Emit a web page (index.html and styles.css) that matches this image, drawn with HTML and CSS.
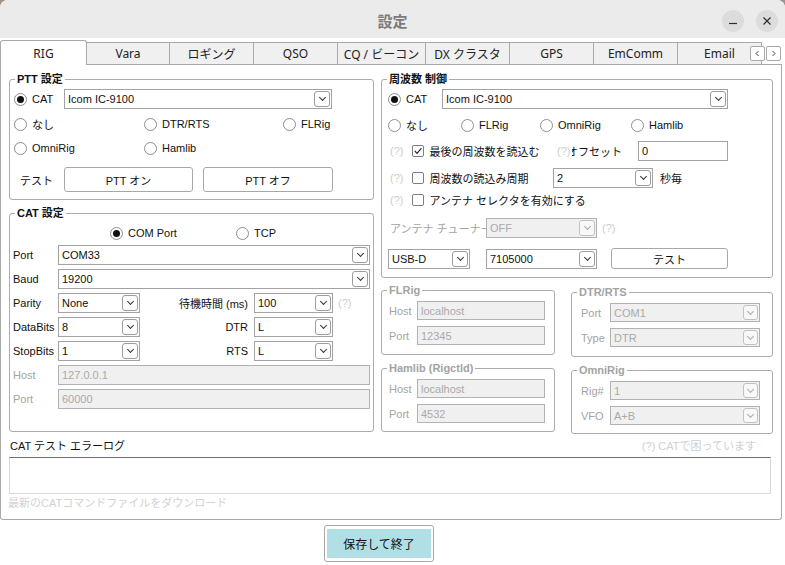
FILE: index.html
```html
<!DOCTYPE html>
<html lang="ja">
<head>
<meta charset="utf-8">
<title>設定</title>
<link rel="stylesheet" href="styles.css">
</head>
<body>
<div class="window">
  <header class="titlebar">
    <div></div>
    <div class="title">設定</div>
    <div class="wbtns">
      <span class="wbtn"><svg width="10" height="10" viewBox="0 0 10 10"><path d="M1 7.5 H9" stroke="#2e2e2e" stroke-width="1.2"/></svg></span>
      <span class="wbtn"><svg width="10" height="10" viewBox="0 0 10 10"><path d="M1.5 1.5 L8.5 8.5 M8.5 1.5 L1.5 8.5" stroke="#2e2e2e" stroke-width="1.2"/></svg></span>
    </div>
  </header>

  <nav class="tabs">
    <div class="tab active t-rig">RIG</div>
    <div class="tab t-vara">Vara</div>
    <div class="tab t-std">ロギング</div>
    <div class="tab t-std">QSO</div>
    <div class="tab t-cq">CQ / ビーコン</div>
    <div class="tab t-std">DX クラスタ</div>
    <div class="tab t-std">GPS</div>
    <div class="tab t-std">EmComm</div>
    <div class="tab t-std">Email</div>
    <div class="tabscroll">
      <span class="tsbtn"><svg width="7" height="7" viewBox="0 0 7 7"><path d="M4.5 1 L2 3.5 L4.5 6" fill="none" stroke="#444" stroke-width="1"/></svg></span>
      <span class="tsbtn"><svg width="7" height="7" viewBox="0 0 7 7"><path d="M2.5 1 L5 3.5 L2.5 6" fill="none" stroke="#444" stroke-width="1"/></svg></span>
    </div>
  </nav>

  <main class="panel">
    <div class="cols">
      <div class="col-left">
        <section class="group g-ptt">
          <div class="gtitle">PTT 設定</div>
          <div class="row r-ptt1">
            <div class="opt c50"><span class="radio on"></span>CAT</div>
            <div class="sel w268"><span class="val">Icom IC-9100</span><span class="dd"></span></div>
          </div>
          <div class="row r-ptt2">
            <div class="opt c130"><span class="radio"></span>なし</div>
            <div class="opt c139"><span class="radio"></span>DTR/RTS</div>
            <div class="opt"><span class="radio"></span>FLRig</div>
          </div>
          <div class="row r-ptt3">
            <div class="opt c130"><span class="radio"></span>OmniRig</div>
            <div class="opt"><span class="radio"></span>Hamlib</div>
          </div>
          <div class="row r-ptt4">
            <span class="testlbl">テスト</span>
            <div class="btn w129">PTT オン</div>
            <div class="btn w130 ml10">PTT オフ</div>
          </div>
        </section>

        <section class="group g-cat">
          <div class="gtitle">CAT 設定</div>
          <div class="row r-conn">
            <div class="opt c126"><span class="radio on"></span>COM Port</div>
            <div class="opt"><span class="radio"></span>TCP</div>
          </div>
          <div class="fld">
            <span class="flbl">Port</span>
            <div class="sel w312"><span class="val">COM33</span><span class="dd"></span></div>
          </div>
          <div class="fld">
            <span class="flbl">Baud</span>
            <div class="sel w312"><span class="val">19200</span><span class="dd"></span></div>
          </div>
          <div class="fld">
            <span class="flbl">Parity</span>
            <div class="sel w82"><span class="val">None</span><span class="dd"></span></div>
            <span class="rlbl">待機時間 (ms)</span>
            <div class="sel w79"><span class="val">100</span><span class="dd"></span></div>
            <span class="q ml5">(?)</span>
          </div>
          <div class="fld">
            <span class="flbl">DataBits</span>
            <div class="sel w82"><span class="val">8</span><span class="dd"></span></div>
            <span class="rlbl">DTR</span>
            <div class="sel w79"><span class="val">L</span><span class="dd"></span></div>
          </div>
          <div class="fld">
            <span class="flbl">StopBits</span>
            <div class="sel w82"><span class="val">1</span><span class="dd"></span></div>
            <span class="rlbl">RTS</span>
            <div class="sel w79"><span class="val">L</span><span class="dd"></span></div>
          </div>
          <div class="fld">
            <span class="flbl dim">Host</span>
            <div class="inp dis w312">127.0.0.1</div>
          </div>
          <div class="fld">
            <span class="flbl dim">Port</span>
            <div class="inp dis w312">60000</div>
          </div>
        </section>
      </div>

      <div class="col-right">
        <section class="group g-freq">
          <div class="gtitle">周波数 制御</div>
          <div class="row rf1">
            <div class="opt c54"><span class="radio on"></span>CAT</div>
            <div class="sel w286"><span class="val">Icom IC-9100</span><span class="dd"></span></div>
          </div>
          <div class="row rf2">
            <div class="opt c73"><span class="radio"></span>なし</div>
            <div class="opt c79"><span class="radio"></span>FLRig</div>
            <div class="opt c91"><span class="radio"></span>OmniRig</div>
            <div class="opt"><span class="radio"></span>Hamlib</div>
          </div>
          <div class="row rf3">
            <div class="qcb c169">
              <span class="q">(?)</span>
              <span class="cb"><svg width="10" height="10" viewBox="0 0 10 10"><path d="M1.8 5 L4.1 7.4 L8.4 2.2" fill="none" stroke="#222" stroke-width="1.1"/></svg></span>
              <span>最後の周波数を読込む</span>
            </div>
            <span class="q qcover">(?)</span>
            <span class="offlbl">オフセット</span>
            <div class="inp w90">0</div>
          </div>
          <div class="row rf4">
            <div class="qcb c165">
              <span class="q">(?)</span>
              <span class="cb"></span>
              <span>周波数の読込み周期</span>
            </div>
            <div class="sel w100"><span class="val">2</span><span class="dd"></span></div>
            <span class="ml7">秒毎</span>
          </div>
          <div class="row rf5">
            <div class="qcb">
              <span class="q">(?)</span>
              <span class="cb"></span>
              <span>アンテナ セレクタを有効にする</span>
            </div>
          </div>
          <div class="row rf6">
            <span class="antlbl">アンテナ チューナー</span>
            <div class="sel dis w111"><span class="val">OFF</span><span class="dd"></span></div>
            <span class="q ml5">(?)</span>
          </div>
          <div class="row rf7">
            <div class="sel w82"><span class="val">USB-D</span><span class="dd"></span></div>
            <div class="sel w111 ml16"><span class="val">7105000</span><span class="dd"></span></div>
            <div class="btn w117 h21 ml14">テスト</div>
          </div>
        </section>

        <div class="subs">
          <div class="subcol-l">
            <section class="group g-dis g-flrig">
              <div class="gtitle">FLRig</div>
              <div class="sfld first">
                <span class="slbl w28">Host</span>
                <div class="inp dis h19 w128">localhost</div>
              </div>
              <div class="sfld">
                <span class="slbl w28">Port</span>
                <div class="inp dis h19 w128">12345</div>
              </div>
            </section>
            <section class="group g-dis g-hamlib">
              <div class="gtitle">Hamlib (Rigctld)</div>
              <div class="sfld first">
                <span class="slbl w28">Host</span>
                <div class="inp dis h19 w128">localhost</div>
              </div>
              <div class="sfld">
                <span class="slbl w28">Port</span>
                <div class="inp dis h19 w128">4532</div>
              </div>
            </section>
          </div>
          <div class="subcol-r">
            <section class="group g-dis g-dtr">
              <div class="gtitle">DTR/RTS</div>
              <div class="sfld first">
                <span class="slbl w29">Port</span>
                <div class="sel dis h19 w150"><span class="val">COM1</span><span class="dd"></span></div>
              </div>
              <div class="sfld">
                <span class="slbl w29">Type</span>
                <div class="sel dis h19 w150"><span class="val">DTR</span><span class="dd"></span></div>
              </div>
            </section>
            <section class="group g-dis g-omni">
              <div class="gtitle">OmniRig</div>
              <div class="sfld first">
                <span class="slbl w29">Rig#</span>
                <div class="sel dis h19 w150"><span class="val">1</span><span class="dd"></span></div>
              </div>
              <div class="sfld">
                <span class="slbl w29">VFO</span>
                <div class="sel dis h19 w150"><span class="val">A+B</span><span class="dd"></span></div>
              </div>
            </section>
          </div>
        </div>
      </div>
    </div>

    <div class="logrow">
      <span>CAT テスト エラーログ</span>
      <span class="help">(?) CATで困っています</span>
    </div>
    <div class="logbox"></div>
    <div class="dl">最新のCATコマンドファイルをダウンロード</div>
  </main>

  <footer class="footer">
    <div class="save"><div class="save-in">保存して終了</div></div>
  </footer>
</div>
</body>
</html>
```

FILE: styles.css
```css
* { box-sizing: border-box; }
html { background: #9d958d; }
body {
  margin: 0;
  width: 785px;
  height: 565px;
  overflow: hidden;
  font-family: "Liberation Sans", "Noto Sans CJK JP", sans-serif;
  font-size: 11px;
  color: #111;
}
.window {
  width: 785px;
  height: 565px;
  background: #fff;
  border-radius: 8px 8px 0 0;
  overflow: hidden;
}

/* title bar */
.titlebar {
  height: 38px;
  background: #ebebeb;
  display: grid;
  grid-template-columns: 1fr auto 1fr;
  align-items: center;
}
.title {
  font-family: "Noto Sans CJK JP", sans-serif;
  font-size: 15px;
  font-weight: 700;
  color: #7c7c7c;
  margin-top: 3px;
}
.wbtns {
  justify-self: end;
  display: flex;
  gap: 12px;
  margin-right: 7px;
  margin-top: 4px;
}
.wbtn {
  width: 22px;
  height: 22px;
  border-radius: 50%;
  background: #dcdcdc;
  display: flex;
  align-items: center;
  justify-content: center;
}

/* tabs */
.tabs {
  position: relative;
  margin-top: 2px;
  width: 782px;
  height: 25px;
  display: flex;
  align-items: flex-end;
  overflow: hidden;
  box-shadow: inset 0 -1px #a9a9a9;
}
.tab {
  flex: none;
  height: 23px;
  border: 1px solid #a9a9a9;
  margin-left: -1px;
  background: #f0f0f0;
  font-family: "Noto Sans", "Noto Sans CJK JP", sans-serif;
  font-size: 12px;
  color: #222;
  display: flex;
  align-items: center;
  justify-content: center;
  white-space: nowrap;
}
.tab:first-child { margin-left: 0; }
.tab.active {
  height: 25px;
  background: #fff;
  border-bottom: none;
  border-radius: 3px 3px 0 0;
  position: relative;
  z-index: 1;
}
.t-rig { width: 87px; }
.t-vara { width: 84px; }
.t-std { width: 85px; }
.t-cq { width: 89px; }
.tabscroll {
  position: absolute;
  left: 750px;
  top: 6px;
  display: flex;
  gap: 1px;
  z-index: 2;
}
.tsbtn {
  width: 15px;
  height: 15px;
  border: 1px solid #a9a9a9;
  border-radius: 2px;
  background: #fff;
  display: flex;
  align-items: center;
  justify-content: center;
}

/* panel */
.panel {
  width: 782px;
  height: 455px;
  border: 1px solid #a9a9a9;
  border-top: none;
  border-radius: 0 0 3px 3px;
  padding: 14px 0 0 8px;
}
.cols { display: flex; align-items: flex-start; }
.col-left { width: 365px; flex: none; }
.col-right { width: 392px; margin-left: 7px; flex: none; }

.group {
  border: 1px solid #acacac;
  border-radius: 3px;
}
.gtitle {
  width: fit-content;
  height: 14px;
  line-height: 14px;
  margin: -8px 0 0 5px;
  padding: 0 2px;
  background: #fff;
  font-weight: bold;
  white-space: nowrap;
}
.g-dis .gtitle { color: #a3a3a3; }

.row { display: flex; align-items: center; }
.opt { display: flex; align-items: center; gap: 5px; white-space: nowrap; flex: none; }
.radio {
  width: 13px;
  height: 13px;
  border: 1px solid #8e8e8e;
  border-radius: 50%;
  background: #fff;
  display: flex;
  align-items: center;
  justify-content: center;
  flex: none;
}
.radio.on::after {
  content: "";
  width: 7px;
  height: 7px;
  border-radius: 50%;
  background: #111;
}
.cb {
  width: 12px;
  height: 12px;
  border: 1px solid #7d7d7d;
  border-radius: 2px;
  background: #fff;
  display: flex;
  align-items: center;
  justify-content: center;
  flex: none;
}
.q { color: #cdcdcd; white-space: nowrap; flex: none; }

/* select / input / button */
.sel {
  display: flex;
  align-items: center;
  height: 20px;
  border: 1px solid #a3a3a3;
  background: #fff;
  padding-left: 3px;
  flex: none;
}
.sel .val { flex: 1; white-space: nowrap; overflow: hidden; }
.dd {
  width: 16px;
  height: 16px;
  border: 1px solid #9d9d9d;
  border-radius: 3px;
  margin-right: 1px;
  background: #fff;
  display: flex;
  align-items: center;
  justify-content: center;
  flex: none;
}
.dd::before {
  content: "";
  width: 4px;
  height: 4px;
  border-right: 1px solid #333;
  border-bottom: 1px solid #333;
  transform: rotate(45deg);
  margin-top: -3px;
}
.sel.dis { background: #f0f0f0; color: #aaa; border-color: #b2b2b2; }
.sel.dis .dd { border-color: #c2c2c2; background: #f8f8f8; }
.sel.dis .dd::before { border-color: #aaa; }
.sel.h19 { height: 19px; }
.sel.h19 .dd { width: 15px; height: 15px; }

.inp {
  display: flex;
  align-items: center;
  height: 20px;
  border: 1px solid #a3a3a3;
  background: #fff;
  padding-left: 3px;
  flex: none;
  white-space: nowrap;
}
.inp.dis { background: #f0f0f0; color: #aaa; border-color: #b2b2b2; }
.inp.h19 { height: 19px; }

.btn {
  height: 25px;
  border: 1px solid #a8a8a8;
  border-radius: 3px;
  background: #fff;
  display: flex;
  align-items: center;
  justify-content: center;
  flex: none;
  white-space: nowrap;
}
.btn.h21 { height: 21px; }

/* widths */
.c50 { width: 50px; }
.c54 { width: 54px; }
.c73 { width: 73px; }
.c79 { width: 79px; }
.c91 { width: 91px; }
.c126 { width: 126px; }
.c130 { width: 130px; }
.c139 { width: 139px; }
.c165 { width: 165px; }
.c169 { width: 169px; }
.w28 { width: 28px; }
.w29 { width: 29px; }
.w79 { width: 79px; }
.w82 { width: 82px; }
.w90 { width: 90px; }
.w100 { width: 100px; }
.w111 { width: 111px; }
.w117 { width: 117px; }
.w128 { width: 128px; }
.w129 { width: 129px; }
.w130 { width: 130px; }
.w150 { width: 150px; }
.w268 { width: 268px; }
.w286 { width: 286px; }
.w312 { width: 312px; }
.ml5 { margin-left: 5px; }
.ml7 { margin-left: 7px; }
.ml10 { margin-left: 10px; }
.ml14 { margin-left: 14px; }
.ml16 { margin-left: 16px; }

/* PTT */
.g-ptt { height: 121px; }
.g-ptt > .row { padding-left: 4px; }
.r-ptt1 { margin-top: 3px; height: 20px; }
.r-ptt2 { margin-top: 7px; height: 16px; }
.r-ptt3 { margin-top: 8px; height: 16px; }
.r-ptt4 { margin-top: 11px; height: 25px; }
.testlbl { width: 50px; padding-left: 6px; flex: none; }

/* CAT */
.g-cat { height: 219px; margin-top: 13px; }
.r-conn { margin-top: 5px; height: 16px; padding-left: 100px; }
.fld {
  display: flex;
  align-items: center;
  margin-top: 4px;
  height: 20px;
  padding-left: 3px;
}
.flbl { width: 45px; flex: none; white-space: nowrap; }
.rlbl { width: 108px; margin-right: 6px; text-align: right; flex: none; white-space: nowrap; }
.dim { color: #a3a3a3; }

/* Frequency */
.g-freq { height: 199px; }
.g-freq > .row { padding-left: 6px; }
.rf1 { margin-top: 3px; height: 20px; }
.rf2 { margin-top: 8px; height: 16px; }
.rf3 { margin-top: 8px; height: 20px; }
.rf4 { margin-top: 7px; height: 20px; }
.rf5 { margin-top: 4px; height: 16px; }
.rf6 { margin-top: 10px; height: 20px; }
.rf7 { margin-top: 10px; height: 21px; }
.qcb { display: flex; align-items: center; flex: none; white-space: nowrap; padding-left: 2px; }
.qcb .cb { margin-left: 9px; margin-right: 5px; }
.qcover { width: 15px; background: #fff; position: relative; z-index: 1; }
.offlbl { margin-left: -5px; width: 71px; flex: none; white-space: nowrap; }
.antlbl {
  width: 98px;
  padding-left: 2px;
  color: #a3a3a3;
  white-space: nowrap;
  overflow: hidden;
  flex: none;
}

/* sub groups */
.subs { display: flex; align-items: flex-start; }
.subcol-l { width: 174px; flex: none; }
.subcol-r { width: 202px; margin-left: 16px; flex: none; }
.g-flrig { margin-top: 12px; height: 65px; }
.g-hamlib { margin-top: 13px; height: 64px; }
.g-dtr { margin-top: 14px; height: 65px; }
.g-omni { margin-top: 13px; height: 64px; }
.sfld { display: flex; align-items: center; height: 19px; margin-top: 6px; }
.sfld.first { margin-top: 4px; }
.g-flrig .sfld, .g-hamlib .sfld { padding-left: 7px; }
.g-dtr .sfld, .g-omni .sfld { padding-left: 9px; }
.slbl { color: #a3a3a3; flex: none; white-space: nowrap; }

/* log */
.logrow {
  margin-top: 4px;
  height: 14px;
  display: flex;
  justify-content: space-between;
  align-items: center;
  padding: 0 25px 0 1px;
  white-space: nowrap;
}
.help { color: #d0d0d0; }
.logbox {
  margin-top: 5px;
  height: 37px;
  width: 762px;
  border: 1px solid #d8d8d8;
  border-top-color: #6e6e6e;
}
.dl {
  margin-top: 2px;
  margin-left: -1px;
  height: 14px;
  line-height: 14px;
  color: #d2d2d2;
  white-space: nowrap;
}

/* footer */
.footer { padding: 5px 0 0 324px; }
.save {
  width: 110px;
  height: 37px;
  border: 1px solid #a8a8a8;
  border-radius: 3px;
  padding: 3px 2px;
  background: #fff;
}
.save-in {
  height: 29px;
  background: #b0e0e6;
  display: flex;
  align-items: center;
  justify-content: center;
  font-size: 12px;
  color: #111;
}
```
